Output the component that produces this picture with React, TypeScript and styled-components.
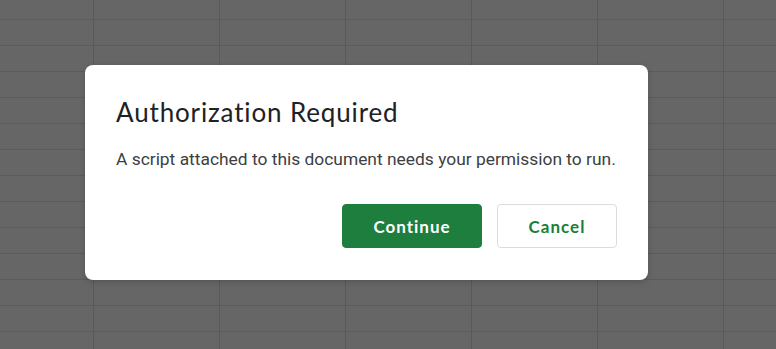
import styled, { createGlobalStyle } from "styled-components";

const GlobalStyle = createGlobalStyle`
  html, body {
    margin: 0;
    padding: 0;
  }
  body {
    width: 776px;
    height: 349px;
    overflow: hidden;
    font-family: Roboto, "Liberation Sans", sans-serif;
  }
`;

const Sheet = styled.div`
  width: 776px;
  height: 349px;
  box-sizing: border-box;
  background-color: #666666;
  background-image: linear-gradient(to right, transparent 125px, #595959 125px),
    linear-gradient(to bottom, transparent 25px, #5b5b5b 25px);
  background-size: 126px 26px, 126px 26px;
  background-position: -32px 0, 0 -6px;
  padding: 65px 0 0 85px;
  display: flex;
  align-items: flex-start;
`;

const Dialog = styled.div`
  width: 563px;
  height: 215px;
  box-sizing: border-box;
  background: #ffffff;
  border-radius: 8px;
  box-shadow: 0 2px 6px rgba(0, 0, 0, 0.18);
  padding: 30px 31px 32px 31px;
  display: flex;
  flex-direction: column;
`;

const Title = styled.h2`
  margin: 0;
  font-family: Lato, "Open Sans", sans-serif;
  font-weight: 400;
  font-size: 26px;
  letter-spacing: 0.85px;
  line-height: 34px;
  color: #202124;
`;

const Body = styled.p`
  margin: 18px 0 0 0;
  font-family: Roboto, sans-serif;
  font-size: 17.4px;
  line-height: 24px;
  color: #3c4043;
`;

const Actions = styled.div`
  margin-top: auto;
  display: flex;
  justify-content: flex-end;
  gap: 15px;
`;

const Button = styled.button<{ primary?: boolean }>`
  height: 44px;
  width: ${({ primary }) => (primary ? "140px" : "120px")};
  box-sizing: border-box;
  border-radius: 4px;
  font-family: Lato, "Open Sans", sans-serif;
  font-weight: 700;
  font-size: 17px;
  letter-spacing: 1px;
  cursor: pointer;
  background: ${({ primary }) => (primary ? "#1e7e3e" : "#ffffff")};
  color: ${({ primary }) => (primary ? "#ffffff" : "#188038")};
  border: 1px solid ${({ primary }) => (primary ? "#1e7e3e" : "#dadce0")};
`;

const App = () => {
  return (
    <>
      <GlobalStyle />
      <Sheet>
        <Dialog>
          <Title>Authorization Required</Title>
          <Body>A script attached to this document needs your permission to run.</Body>
          <Actions>
            <Button primary>Continue</Button>
            <Button>Cancel</Button>
          </Actions>
        </Dialog>
      </Sheet>
    </>
  );
};

export default App;
